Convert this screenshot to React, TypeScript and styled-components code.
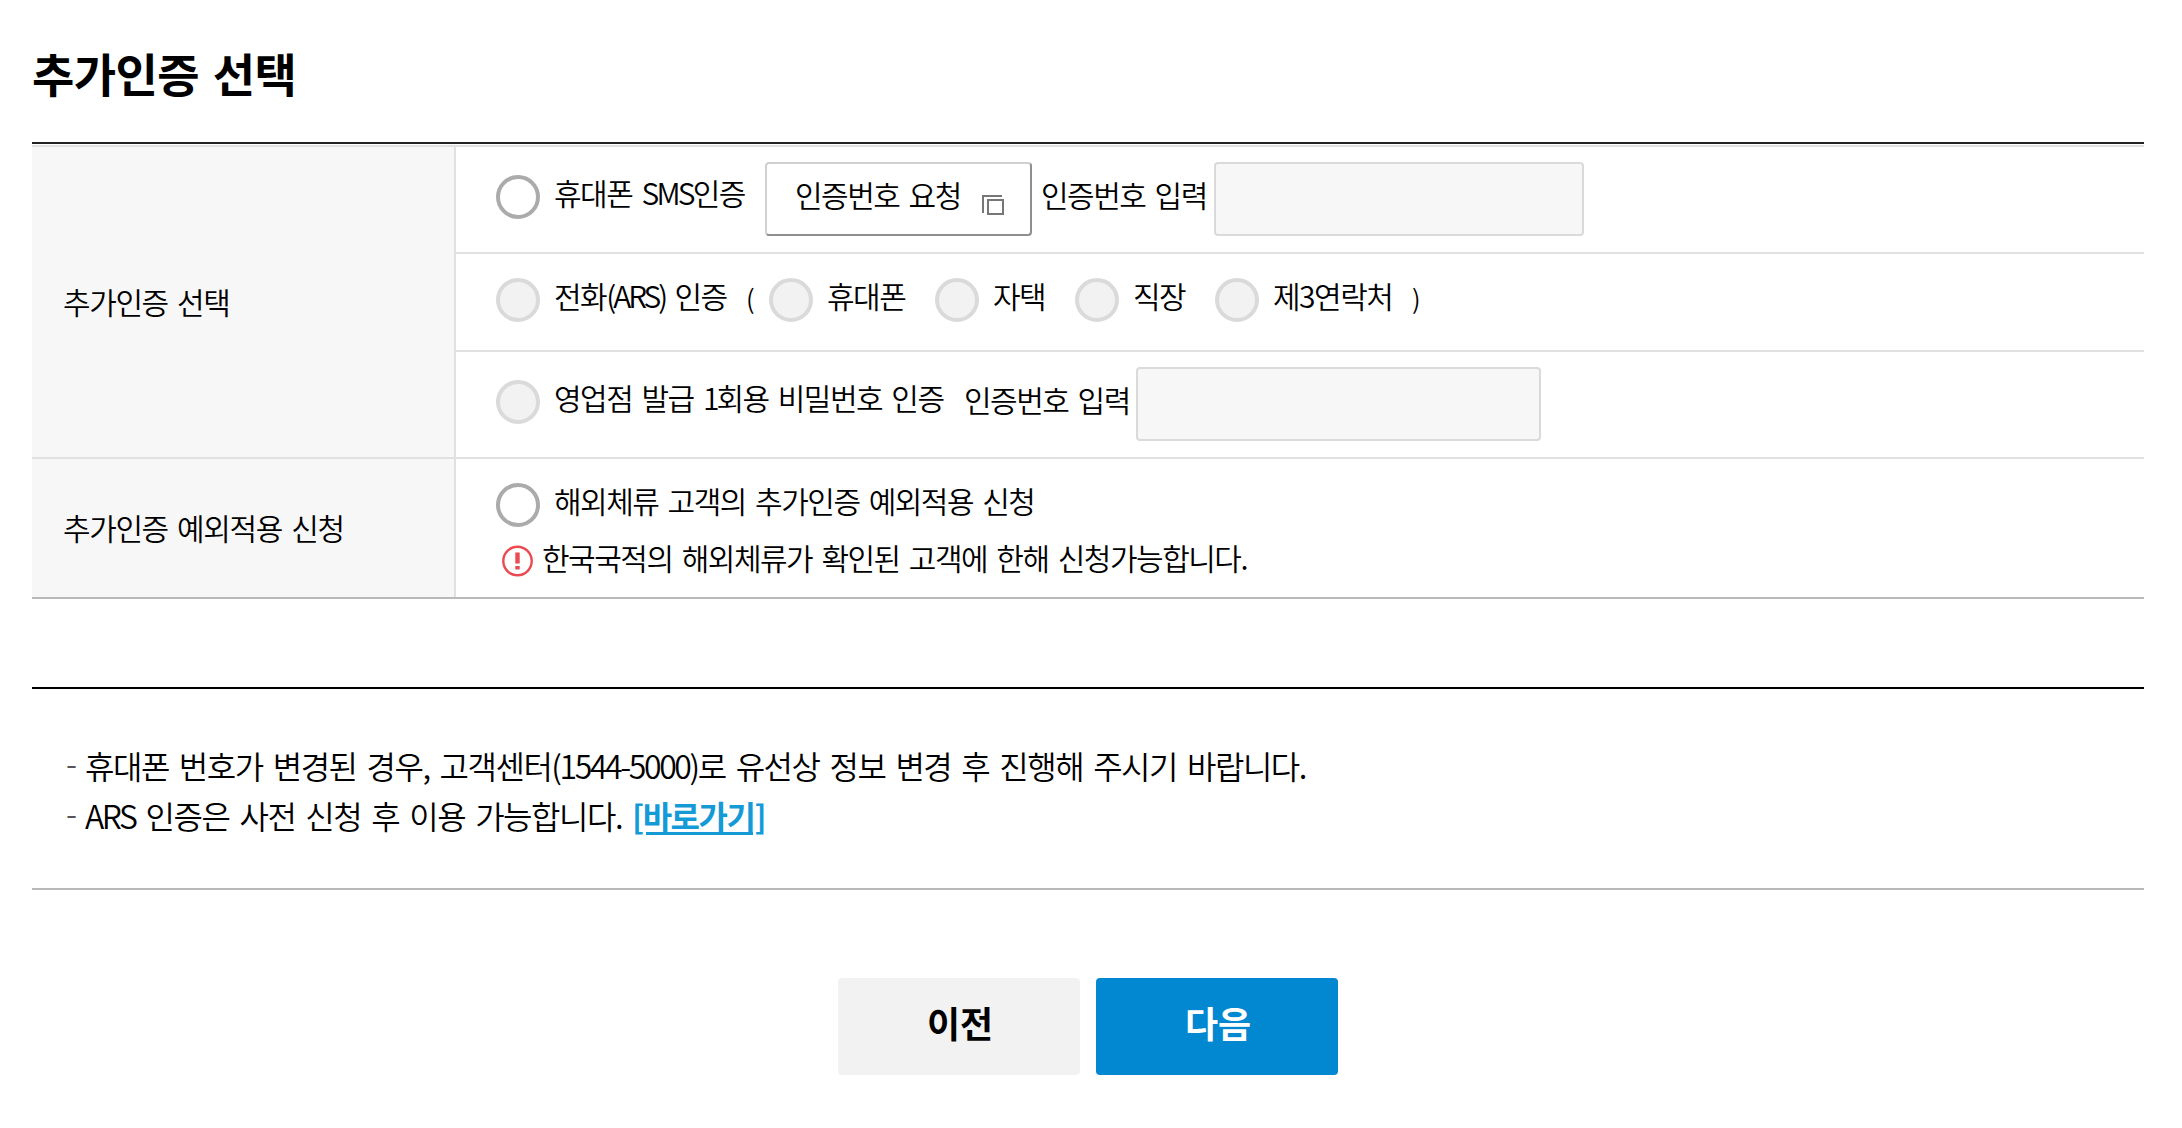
import React from 'react';
import styled, { createGlobalStyle } from 'styled-components';

const COLOR = {
    BLACK: '#000',
    TABLETOP: '#222',
    LINE: '#e1e1e1',
    DARKLINE: '#b9b9b9',
    HEADER: '#f7f7f7',
    BLUE: '#0288d1',
    LINK: '#149bd7',
    RED: '#ea4a50',
};

const GlobalStyle = createGlobalStyle`
    * {
        box-sizing: border-box;
    }

    body {
        margin: 0;
        background: #fff;
        color: ${COLOR.BLACK};
        font-family: "Noto Sans CJK KR", sans-serif;
        font-size: 30px;
        font-weight: 350;
        letter-spacing: -1.5px;
        word-spacing: 4px;
        white-space: nowrap;
    }
`;

interface IRadioItem {
    name: string;
    label: React.ReactNode;
    width?: number;
    disabled?: boolean;
}

const RadioItem = ({ name, label, width, disabled = false }: IRadioItem) => (
    <RadioLabel width={width}>
        <Radio type="radio" name={name} disabled={disabled}/>
        <RadioText>{label}</RadioText>
    </RadioLabel>
);

const PopupIcon = () => (
    <PopupSvg width="22" height="20" viewBox="0 0 22 20" fill="none" stroke="#777" strokeWidth="2">
        <path d="M1 18V1H20"/>
        <path d="M6 5H21V19H6Z"/>
    </PopupSvg>
);

const AlertIcon = () => (
    <svg width="31" height="32" viewBox="0 0 31 32" fill="none">
        <circle cx="15.5" cy="16" r="14.2" stroke={COLOR.RED} strokeWidth="2.4"/>
        <path d="M15.5 7.5V18.5M15.5 21V24.5" stroke={COLOR.RED} strokeWidth="4.4"/>
    </svg>
);

const App = () => (
    <Page>
        <GlobalStyle/>
        <PageTitle>추가인증 선택</PageTitle>

        <FormTable>
            <FormGroup>
                <GroupName>추가인증 선택</GroupName>
                <GroupBody>
                    <FormRow height={107}>
                        <RadioItem name="auth" label={<>휴대폰 <Latin tracking={-2.8}>SMS</Latin>인증</>} width={269}/>
                        <RequestButton type="button">
                            <RequestText>인증번호 요청</RequestText>
                            <PopupIcon/>
                        </RequestButton>
                        <FieldName indent={9}>인증번호 입력</FieldName>
                        <CodeInput width={370} disabled/>
                    </FormRow>
                    <FormRow height={98}>
                        <RadioItem name="auth" label={<>전화<Latin tracking={-3}>(ARS)</Latin> 인증</>} width={250} disabled/>
                        <Paren>(</Paren>
                        <RadioItem name="phone" label="휴대폰" width={166} disabled/>
                        <RadioItem name="phone" label="자택" width={140} disabled/>
                        <RadioItem name="phone" label="직장" width={140} disabled/>
                        <RadioItem name="phone" label="제3연락처" width={197} disabled/>
                        <Paren>)</Paren>
                    </FormRow>
                    <FormRow height={105}>
                        <RadioItem name="auth" label={<>영업점 발급 <Latin tracking={-3}>1</Latin>회용 비밀번호 인증</>} width={468} disabled/>
                        <FieldName width={172}>인증번호 입력</FieldName>
                        <CodeInput width={405} disabled/>
                    </FormRow>
                </GroupBody>
            </FormGroup>
            <FormGroup>
                <GroupName>추가인증 예외적용 신청</GroupName>
                <ExceptionBody>
                    <RadioItem name="auth" label="해외체류 고객의 추가인증 예외적용 신청"/>
                    <Warning>
                        <AlertIcon/>
                        <WarningText>한국국적의 해외체류가 확인된 고객에 한해 신청가능합니다.</WarningText>
                    </Warning>
                </ExceptionBody>
            </FormGroup>
        </FormTable>

        <NoteList>
            <Note>
                <Dash>-</Dash>
                <span>휴대폰 번호가 변경된 경우, 고객센터<Latin tracking={-2.4}>(1544-5000)</Latin>로 유선상 정보 변경 후 진행해 주시기 바랍니다.</span>
            </Note>
            <Note>
                <Dash>-</Dash>
                <span><Latin tracking={-2.4}>ARS</Latin> 인증은 사전 신청 후 이용 가능합니다. <NoteLink href="#">[바로가기]</NoteLink></span>
            </Note>
        </NoteList>

        <ButtonBar>
            <StepButton type="button">이전</StepButton>
            <StepButton type="button" primary>다음</StepButton>
        </ButtonBar>
    </Page>
);

const Page = styled.div`
    padding: 0 38px 0 32px;
`;

const PageTitle = styled.h1`
    margin: 0;
    padding: 42px 0 40px;
    font-size: 46px;
    font-weight: 700;
    line-height: 60px;
    letter-spacing: -0.6px;
`;

// latin letters and digits are set tighter than the hangul around them
const Latin = styled.span<{ tracking: number }>`
    letter-spacing: ${props => props.tracking}px;
`;

const FormTable = styled.div`
    padding-top: 1px;
    border-top: 2px solid ${COLOR.TABLETOP};
    border-bottom: 2px solid ${COLOR.DARKLINE};
`;

const FormGroup = styled.div`
    display: grid;
    grid-template-columns: 424px 1fr;
    border-top: 2px solid ${COLOR.LINE};
`;

const GroupName = styled.div`
    display: flex;
    align-items: center;
    padding: 0 0 2px 31px;
    background: ${COLOR.HEADER};
    border-right: 2px solid ${COLOR.LINE};
    letter-spacing: -1.4px;
`;

const GroupBody = styled.div``;

const FormRow = styled.div<{ height: number }>`
    display: flex;
    align-items: center;
    height: ${props => props.height}px;
    padding-left: 40px;

    &:not(:last-child) {
        border-bottom: 2px solid ${COLOR.LINE};
    }
`;

const ExceptionBody = styled.div`
    height: 138px;
    padding: 24px 0 0 40px;
`;

const RadioLabel = styled.label<{ width?: number }>`
    display: flex;
    align-items: center;
    flex: none;
    gap: 14px;
    width: ${props => props.width ? `${props.width}px` : 'auto'};
    height: 44px;
    margin-bottom: 5px;
`;

const Radio = styled.input`
    appearance: none;
    flex: none;
    width: 44px;
    height: 44px;
    margin: 0;
    border: 4px solid #ababab;
    border-radius: 50%;
    background: #fff;

    &:disabled {
        border-color: #dadada;
        background: #f2f2f2;
    }
`;

const RadioText = styled.span`
    padding-bottom: 10px;
`;

const RequestButton = styled.button`
    display: flex;
    align-items: center;
    justify-content: space-between;
    width: 267px;
    height: 74px;
    margin-bottom: 1px;
    padding: 0 26px 0 28px;
    border: 2px solid;
    border-color: #d0d0d0 #8f8f8f #8f8f8f #d0d0d0;
    border-radius: 4px;
    background: #fff;
    color: inherit;
    font: inherit;
    letter-spacing: inherit;
    word-spacing: inherit;
`;

const RequestText = styled.span`
    padding-bottom: 11px;
`;

const PopupSvg = styled.svg`
    margin-top: 12px;
`;

const FieldName = styled.span<{ indent?: number; width?: number }>`
    width: ${props => props.width ?? 173}px;
    margin-left: ${props => props.indent ?? 0}px;
    padding-bottom: 11px;
`;

const CodeInput = styled.input<{ width: number }>`
    width: ${props => props.width}px;
    height: 74px;
    margin: 0 0 1px;
    border: 2px solid #dadada;
    border-radius: 4px;
    background: ${COLOR.HEADER};
`;

const Paren = styled.span`
    width: 23px;
    padding-bottom: 9px;
    font-size: 26px;
`;

const Warning = styled.div`
    display: flex;
    align-items: center;
    gap: 9px;
    height: 32px;
    margin-top: 18px;
    padding-left: 6px;
`;

const WarningText = styled.span`
    padding-bottom: 8px;
`;

const NoteList = styled.ul`
    margin: 88px 0 0;
    padding: 51px 0 48px 34px;
    border-top: 2px solid ${COLOR.BLACK};
    border-bottom: 2px solid ${COLOR.DARKLINE};
    list-style: none;
    font-size: 32px;
    line-height: 50px;
    letter-spacing: -1.5px;
    word-spacing: 4.4px;
`;

const Note = styled.li`
    display: flex;
    height: 50px;
`;

const Dash = styled.span`
    width: 19px;
    color: #555;
    line-height: 44px;
`;

const NoteLink = styled.a`
    color: ${COLOR.LINK};
    font-weight: 700;
    text-decoration: underline;
    text-decoration-thickness: 3px;
    text-underline-offset: 3px;
`;

const ButtonBar = styled.div`
    display: flex;
    justify-content: center;
    gap: 16px;
    margin-top: 88px;
`;

const StepButton = styled.button<{ primary?: boolean }>`
    width: 242px;
    height: 97px;
    padding: 0 0 10px 2px;
    border: 0;
    border-radius: 4px;
    background: ${props => props.primary ? COLOR.BLUE : '#f2f2f2'};
    color: ${props => props.primary ? '#fff' : COLOR.BLACK};
    font-family: inherit;
    font-size: 36px;
    font-weight: 700;
    letter-spacing: 0;
`;

export default App;
